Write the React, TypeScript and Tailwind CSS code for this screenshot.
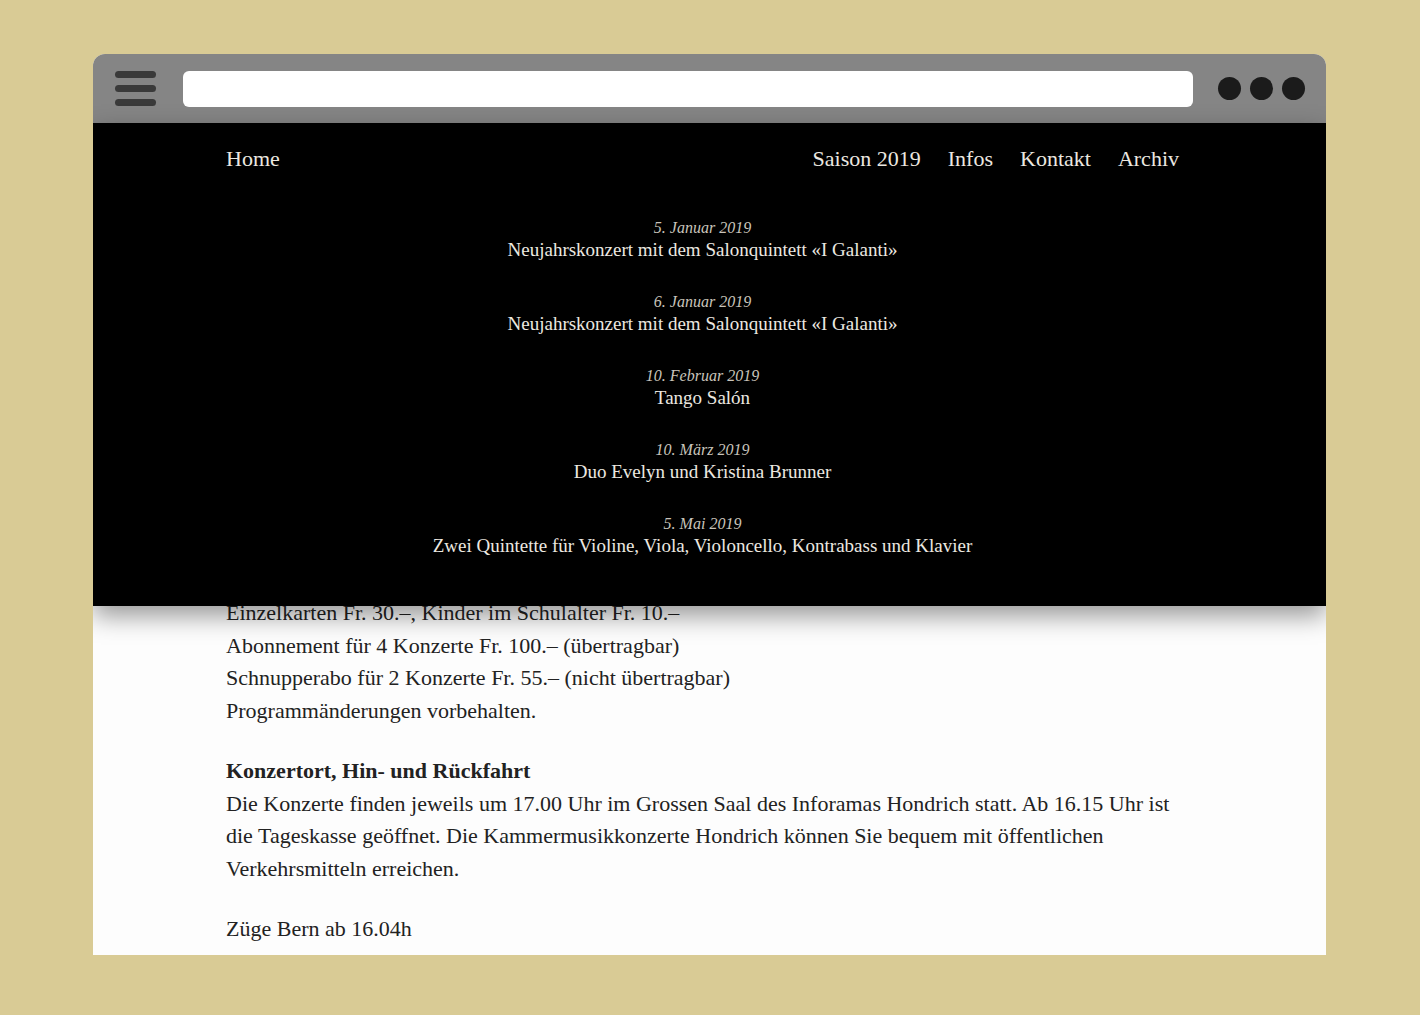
import React from "react";

const events = [
  { date: "5. Januar 2019", title: "Neujahrskonzert mit dem Salonquintett «I Galanti»" },
  { date: "6. Januar 2019", title: "Neujahrskonzert mit dem Salonquintett «I Galanti»" },
  { date: "10. Februar 2019", title: "Tango Salón" },
  { date: "10. März 2019", title: "Duo Evelyn und Kristina Brunner" },
  { date: "5. Mai 2019", title: "Zwei Quintette für Violine, Viola, Violoncello, Kontrabass und Klavier" },
];

const navRight = ["Saison 2019", "Infos", "Kontakt", "Archiv"];

const BrowserBar: React.FC = () => (
  <div className="flex h-[69px] shrink-0 items-center bg-[#858585] pl-[22px] pr-[21px]">
    <div className="flex w-[41px] flex-col gap-[7px]">
      <span className="h-[7px] rounded-full bg-[#3a3a3a]" />
      <span className="h-[7px] rounded-full bg-[#3a3a3a]" />
      <span className="h-[7px] rounded-full bg-[#3a3a3a]" />
    </div>
    <div className="ml-[27px] h-[36px] flex-1 rounded-[6px] bg-white" />
    <div className="ml-[25px] flex gap-[9px]">
      <span className="h-[23px] w-[23px] rounded-full bg-[#1b1b1b]" />
      <span className="h-[23px] w-[23px] rounded-full bg-[#1b1b1b]" />
      <span className="h-[23px] w-[23px] rounded-full bg-[#1b1b1b]" />
    </div>
  </div>
);

const App: React.FC = () => {
  return (
    <div className="min-h-screen bg-[#d9cb95] pl-[93px] pt-[54px] font-['Liberation_Serif',serif]">
      <div className="flex h-[901px] w-[1233px] flex-col overflow-hidden rounded-t-[12px] bg-[#fdfdfd]">
        <BrowserBar />

        <header className="relative z-10 shrink-0 bg-black pb-[49px] pl-[133px] pr-[147px] pt-[20px] shadow-[0_10px_24px_rgba(0,0,0,0.4)]">
          <nav className="flex h-[30px] items-center justify-between text-[22px] text-[#ece8e0]">
            <a>Home</a>
            <div className="flex gap-[27px]">
              {navRight.map((item) => (
                <a key={item}>{item}</a>
              ))}
            </div>
          </nav>

          <ul className="mt-[44px] flex flex-col items-center gap-[30px] text-center">
            {events.map((ev, i) => (
              <li key={i}>
                <div className="text-[16px] italic leading-[22px] text-[#c9c4bb]">{ev.date}</div>
                <div className="text-[19px] leading-[22px] text-[#ece8e0]">{ev.title}</div>
              </li>
            ))}
          </ul>
        </header>

        <main className="-mt-[9px] shrink-0 pl-[133px] pr-[147px] text-[22px] leading-[32.5px] text-[#222]">
          <p>
            Einzelkarten Fr. 30.–, Kinder im Schulalter Fr. 10.–
            <br />
            Abonnement für 4 Konzerte Fr. 100.– (übertragbar)
            <br />
            Schnupperabo für 2 Konzerte Fr. 55.– (nicht übertragbar)
            <br />
            Programmänderungen vorbehalten.
          </p>

          <p className="mt-[28px]">
            <strong className="font-bold">Konzertort, Hin- und Rückfahrt</strong>
            <br />
            Die Konzerte finden jeweils um 17.00 Uhr im Grossen Saal des Inforamas Hondrich statt. Ab 16.15 Uhr ist
            <br />
            die Tageskasse geöffnet. Die Kammermusikkonzerte Hondrich können Sie bequem mit öffentlichen
            <br />
            Verkehrsmitteln erreichen.
          </p>

          <p className="mt-[28px]">
            Züge Bern ab 16.04h
            <br />
            Langnau ab Oberdiessbach 16.10h
          </p>
        </main>
      </div>
    </div>
  );
};

export default App;
